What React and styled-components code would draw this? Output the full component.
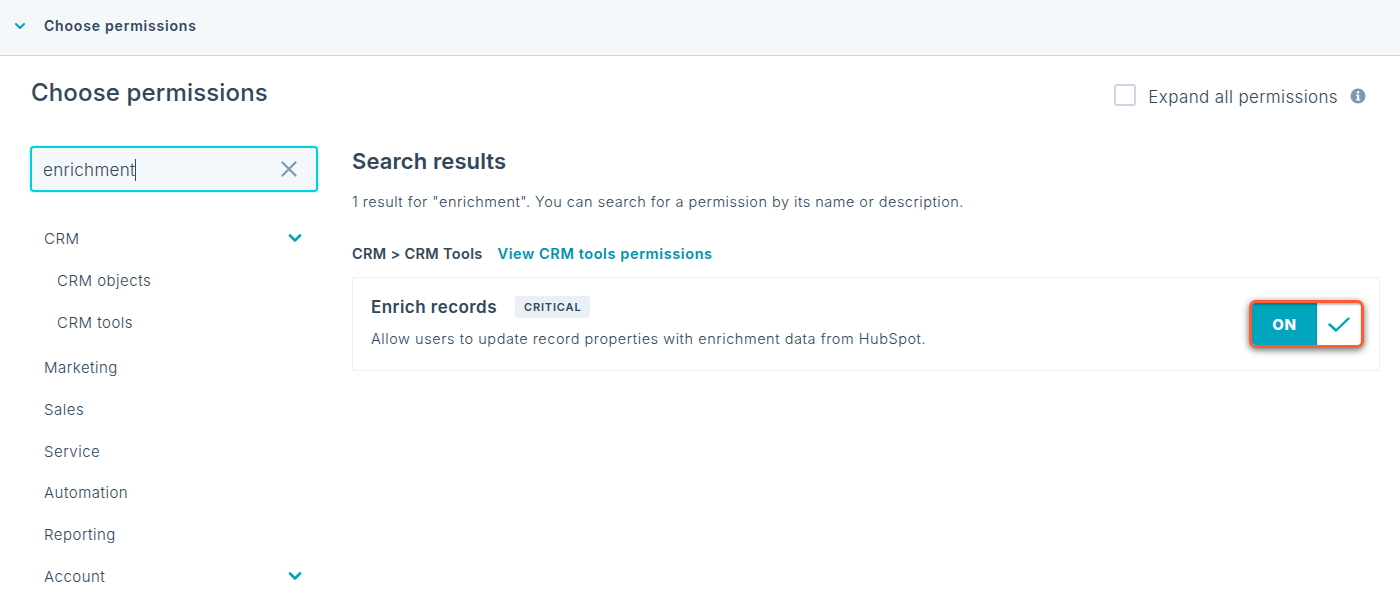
import React from "react";
import styled, { createGlobalStyle } from "styled-components";

const Global = createGlobalStyle`
  html, body { margin: 0; padding: 0; background: #fff; overflow: hidden; }
  body { font-family: "Inter", "Liberation Sans", sans-serif; color: #33475b; }
`;
const Page = styled.div`width: 1400px; height: 602px; overflow: hidden; display: flex; flex-direction: column;`;
const TopBar = styled.header`
  height: 56px; box-sizing: border-box; flex: none; background: #f5f8fa; border-bottom: 1px solid #cbd6e2;
  display: flex; align-items: center; padding: 0 0 4px 14px; gap: 18px;
`;
const TopTitle = styled.span`font-size: 14px; font-weight: 600; letter-spacing: 0.8px;`;
const Body = styled.div`
  display: grid; grid-template-columns: 288px 1fr; grid-template-rows: 90px auto; align-content: start;
  column-gap: 34px; padding: 0 20px 0 30px; flex: 1; min-height: 0;
`;
const HeaderRow = styled.div`
  grid-column: 1 / -1; display: flex; justify-content: space-between; margin-right: 14px;
`;
const Title = styled.h1`margin: 20px 0 0 1px; font-size: 24px; line-height: 34px; font-weight: 500; letter-spacing: 0.15px;`;
const Expand = styled.label`display: flex; align-items: center; height: 24px; margin-top: 28px;`;
const Box = styled.span`
  width: 18px; height: 18px; border: 2px solid #cbd6e2; border-radius: 3px; background: #fff; margin-right: 12px; margin-top: -2px;
`;
const ExpandText = styled.span`font-size: 17px; font-weight: 300; letter-spacing: 0.37px; margin-right: 12px; margin-top: 2px;`;
const Side = styled.nav`display: flex; flex-direction: column;`;
const Search = styled.div`
  height: 46px; box-sizing: border-box; border: 2px solid #00d0e4; border-radius: 4px; background: #f5f8fa;
  display: flex; align-items: center; justify-content: space-between; padding: 0 19px 0 11px; margin-bottom: 25px;
  box-shadow: 0 0 2px rgba(0,208,228,.5);
`;
const SearchText = styled.span`
  font-size: 17px; font-weight: 300; letter-spacing: .3px; display: inline-block; border-right: 1px solid #33475b; line-height: 22px; margin-top: 2px;
`;
const NavItem = styled.div`
  display: flex; align-items: center; justify-content: space-between; height: ${p => p.$short ? 41 : 42}px; box-sizing: border-box;
  font-size: 15px; font-weight: 300; letter-spacing: .5px; padding: 0 15px 0 ${p => p.$sub ? 27 : 14}px;
  margin-bottom: ${p => p.$gap ? 3 : 0}px;
`;
const Main = styled.main`min-width: 0;`;
const Section = styled.h2`margin: 0 0 15px; font-size: 22px; line-height: 30px; font-weight: 600; letter-spacing: 0.1px;`;
const Note = styled.p`margin: 0 0 30px; font-size: 14.5px; font-weight: 300; line-height: 22px; letter-spacing: 0.5px;`;
const Crumbs = styled.div`display: flex; gap: 15px; font-size: 14.5px; font-weight: 600; line-height: 22px; letter-spacing: 0.33px; margin-bottom: 12px;`;
const Link = styled.a`color: #0091ae; letter-spacing: .6px;`;
const Card = styled.section`
  height: 94px; box-sizing: border-box; border: 1px solid #eaf0f6; display: flex; align-items: center;
  justify-content: space-between; padding: 0 15px 0 18px;
`;
const CardText = styled.div`display: flex; flex-direction: column; gap: 10px; padding-bottom: 3px;`;
const CardHead = styled.div`display: flex; align-items: center; gap: 18px;`;
const CardTitle = styled.span`font-size: 17px; font-weight: 600; letter-spacing: 0.45px;`;
const Badge = styled.span`
  background: #eaf0f6; border-radius: 3px; font-size: 11px; font-weight: 600; letter-spacing: .85px;
  height: 22px; padding: 0 9px; display: flex; align-items: center;
`;
const Desc = styled.span`font-size: 14.5px; font-weight: 300; line-height: 22px; letter-spacing: 0.56px;`;
const Toggle = styled.div`
  width: 115px; height: 48px; box-sizing: border-box; border: 3px solid #ff5c35; border-radius: 7px; display: flex;
  overflow: hidden; background: #fff; box-shadow: 0 2px 7px rgba(0,0,0,.6);
`;
const ToggleOn = styled.div`
  width: 65px; background: #00a4bd; color: #fff; font-size: 15px; font-weight: 800; letter-spacing: .6px;
  display: flex; align-items: center; justify-content: center; box-shadow: inset 0 2px 2px rgba(0,0,0,.25);
`;
const ToggleOff = styled.div`
  flex: 1; display: flex; align-items: center; justify-content: center; box-shadow: inset 0 2px 2px rgba(0,0,0,.25);
`;

const Chevron = ({ size = 16, w = 2.6 }) => (
  <svg width={size} height={size} viewBox="0 0 16 16" fill="none">
    <path d="M3 5.5 8 10.5 13 5.5" stroke="#00a4bd" strokeWidth={w} strokeLinecap="round" strokeLinejoin="round" />
  </svg>
);

export default function App() {
  return (
    <Page>
      <Global />
      <TopBar>
        <svg width="12" height="12" viewBox="0 0 12 12" fill="none">
          <path d="M2 4 6 8 10 4" stroke="#00a4bd" strokeWidth="2" strokeLinecap="round" strokeLinejoin="round" />
        </svg>
        <TopTitle>Choose permissions</TopTitle>
      </TopBar>
      <Body>
        <HeaderRow>
          <Title>Choose permissions</Title>
          <Expand>
            <Box />
            <ExpandText>Expand all permissions</ExpandText>
            <svg width="16" height="16" viewBox="0 0 16 16">
              <circle cx="8" cy="8" r="7.5" fill="#7c98b6" />
              <rect x="6.9" y="3" width="2.4" height="2.4" rx="1.2" fill="#fff" />
              <path d="M6.3 6.6h2.9v4.6h1v1.4H6.1v-1.4h1V8H6.3z" fill="#fff" />
            </svg>
          </Expand>
        </HeaderRow>
        <Side>
          <Search>
            <SearchText>enrichment</SearchText>
            <svg width="16" height="16" viewBox="0 0 16 16" fill="none">
              <path d="M1.5 1.5 14.5 14.5M14.5 1.5 1.5 14.5" stroke="#7c98b6" strokeWidth="2.2" strokeLinecap="round" />
            </svg>
          </Search>
          <NavItem>CRM <Chevron /></NavItem>
          <NavItem $sub>CRM objects</NavItem>
          <NavItem $sub $gap>CRM tools</NavItem>
          <NavItem>Marketing</NavItem>
          <NavItem>Sales</NavItem>
          <NavItem>Service</NavItem>
          <NavItem $short>Automation</NavItem>
          <NavItem>Reporting</NavItem>
          <NavItem>Account <Chevron /></NavItem>
        </Side>
        <Main>
          <Section>Search results</Section>
          <Note>1 result for "enrichment". You can search for a permission by its name or description.</Note>
          <Crumbs>
            <span>CRM &gt; CRM Tools</span>
            <Link>View CRM tools permissions</Link>
          </Crumbs>
          <Card>
            <CardText>
              <CardHead>
                <CardTitle>Enrich records</CardTitle>
                <Badge>CRITICAL</Badge>
              </CardHead>
              <Desc>Allow users to update record properties with enrichment data from HubSpot.</Desc>
            </CardText>
            <Toggle>
              <ToggleOn>ON</ToggleOn>
              <ToggleOff>
                <svg width="22" height="15" viewBox="0 0 22 15" fill="none">
                  <path d="M1.5 7.5 8 13.5 20.5 1.5" stroke="#00a4bd" strokeWidth="2.4" strokeLinecap="round" strokeLinejoin="round" />
                </svg>
              </ToggleOff>
            </Toggle>
          </Card>
        </Main>
      </Body>
    </Page>
  );
}
